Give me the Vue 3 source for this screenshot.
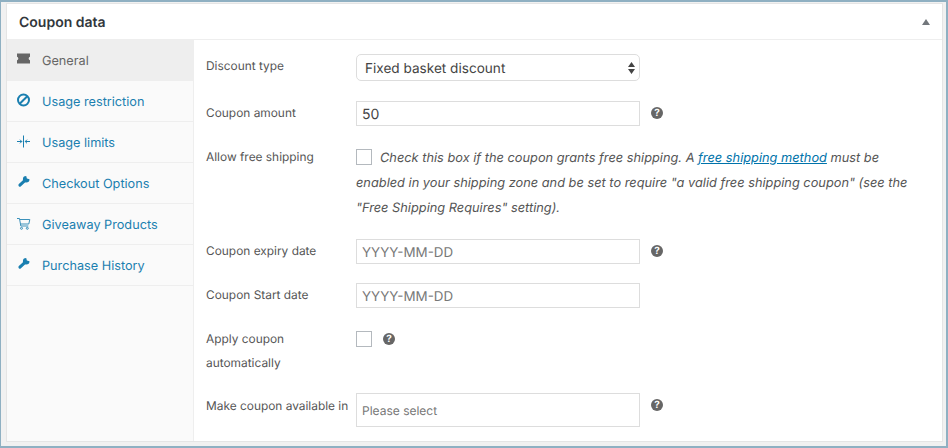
<script setup>
const tabs = [
  { label: 'General', icon: 'ticket', active: true },
  { label: 'Usage restriction', icon: 'ban' },
  { label: 'Usage limits', icon: 'limits' },
  { label: 'Checkout Options', icon: 'wrench' },
  { label: 'Giveaway Products', icon: 'cart' },
  { label: 'Purchase History', icon: 'wrench' },
]
</script>

<template>
  <div class="frame">
    <section class="panel">
      <header class="head">
        <h2>Coupon data</h2>
        <span class="caret"></span>
      </header>
      <div class="body">
        <nav class="side">
          <a v-for="t in tabs" :key="t.label" class="tab" :class="{ active: t.active }">
            <svg class="ico" viewBox="0 0 14 14" width="14" height="14">
              <path v-if="t.icon === 'ticket'" fill="currentColor" d="M0 1.500h13v3.200c-.9.300-1.300 1-1.300 1.800s.4 1.500 1.300 1.800v3.200H0V8.300c.9-.3 1.300-1 1.300-1.800S.9 5 0 4.700z"/>
              <g v-else-if="t.icon === 'ban'">
                <circle cx="6.500" cy="7" r="5.500" fill="none" stroke="currentColor" stroke-width="2"/>
                <path d="M2.700 10.800l7.600-7.600" stroke="currentColor" stroke-width="2"/>
              </g>
              <path v-else-if="t.icon === 'limits'" fill="none" stroke="currentColor" stroke-width="1" d="M6.500 1.500v12M0 7.500h4.800M3 5.700l1.800 1.800L3 9.300M13 7.500H8.200M10 5.700L8.200 7.500 10 9.300"/>
              <g v-else-if="t.icon === 'wrench'">
                <path fill="currentColor" d="M9.200 1L9.900 3.600L12.500 4.300A3.300 3.300 0 1 1 9.200 1Z"/>
                <path d="M2.900 10.200L7.500 5.800" stroke="currentColor" stroke-width="3" stroke-linecap="round"/>
              </g>
              <g v-else fill="none" stroke="currentColor" stroke-width="1" opacity=".85">
                <path d="M0 2.500h2.500l1.300 7.500h7.500M2.800 3.500h10l-1 4.500H3.500"/>
                <circle cx="4.500" cy="12.300" r="1"/>
                <circle cx="10.300" cy="12.300" r="1"/>
              </g>
            </svg>
            <span class="tab-label">{{ t.label }}</span>
          </a>
        </nav>
        <div class="form">
          <div class="row r-type">
            <label>Discount type</label>
            <div class="fake-select">
              <span class="sel-label">Fixed basket discount</span>
              <svg width="7" height="12" viewBox="0 0 7 12"><path fill="#444" d="M3.500 0L7 5H0zM3.500 12L0 7h7z"/></svg>
            </div>
          </div>
          <div class="row r-amount">
            <label>Coupon amount</label>
            <div class="ctl">
              <input class="text val" value="50" />
              <span class="help">?</span>
            </div>
          </div>
          <div class="row r-ship">
            <label>Allow free shipping</label>
            <p class="ship"><span class="check"></span>Check this box if the coupon grants free shipping. A <a>free shipping method</a> must be enabled in your shipping zone and be set to require "a valid free shipping coupon" (see the "Free Shipping Requires" setting).</p>
          </div>
          <div class="row r-expiry">
            <label>Coupon expiry date</label>
            <div class="ctl">
              <input class="text" placeholder="YYYY-MM-DD" />
              <span class="help">?</span>
            </div>
          </div>
          <div class="row r-start">
            <label>Coupon Start date</label>
            <div class="ctl">
              <input class="text" placeholder="YYYY-MM-DD" />
            </div>
          </div>
          <div class="row r-auto">
            <label>Apply coupon<br />automatically</label>
            <div class="ctl top">
              <span class="check"></span>
              <span class="help small">?</span>
            </div>
          </div>
          <div class="row r-avail">
            <label>Make coupon available in</label>
            <div class="ctl top">
              <div class="multi">Please select</div>
              <span class="help">?</span>
            </div>
          </div>
        </div>
      </div>
    </section>
  </div>
</template>

<style scoped>
.frame {
  width: 948px;
  height: 448px;
  box-sizing: border-box;
  border: solid #8fb0c2;
  border-width: 2px 2px 2px 1px;
  background: #f1f1f1;
  padding: 1px 3px 4px 5px;
  font-family: Inter, "Liberation Sans", sans-serif;
  text-rendering: geometricPrecision;
  overflow: hidden;
}
.panel {
  height: 100%;
  box-sizing: border-box;
  background: #fff;
  border: 1px solid #e5e5e5;
  display: flex;
  flex-direction: column;
}
.head {
  height: 36px;
  box-sizing: border-box;
  flex: none;
  border-bottom: 1px solid #eee;
  display: flex;
  align-items: center;
  justify-content: space-between;
  padding: 0 12px;
}
h2 {
  margin: 0;
  padding-top: 2px;
  font-size: 14px;
  font-weight: 600;
  color: #32373c;
}
.caret {
  width: 0;
  height: 0;
  border: 4.500px solid transparent;
  border-top-width: 0;
  border-bottom: 6px solid #72777c;
}
.body { display: flex; flex: 1; min-height: 0; }
.side {
  width: 186px;
  flex: none;
  background: #fafafa;
  border-right: 1px solid #eee;
}
.tab {
  height: 40px;
  border-bottom: 1px solid #eee;
  display: flex;
  align-items: center;
  gap: 11px;
  padding-left: 10px;
  color: #1a7fb0;
  font-size: 12.700px;
}
.tab-label { padding-top: 2px; }
.tab.active { background: #eee; color: #666; }
.ico { flex: none; margin-top: -2px; }
.form {
  flex: 1;
  padding: 14px 0 0 12px;
  font-size: 12px;
  color: #555;
}
.row { display: grid; grid-template-columns: 150px 1fr; }
label { font-size: 11.900px; color: #555; line-height: 24px; }
.r-type { height: 47px; }
.r-amount { height: 48px; }
.r-ship { height: 90px; }
.r-ship label { margin-top: -4px; }
.r-expiry { height: 44px; }
.r-start { height: 48px; }
.r-auto { height: 62px; }
.r-auto label { margin-top: -4px; }
.fake-select {
  width: 284px;
  height: 27px;
  box-sizing: border-box;
  border: 1px solid #ddd;
  border-radius: 5px;
  display: flex;
  align-items: center;
  justify-content: space-between;
  padding: 0 4px 0 8px;
  font-size: 13.600px;
  color: #444;
}
.sel-label { padding-top: 2px; }
.ctl { display: flex; align-items: center; gap: 11px; height: 25px; }
.ctl.top { align-items: flex-start; }
.text {
  width: 284px;
  height: 25px;
  box-sizing: border-box;
  border: 1px solid #ddd;
  padding: 2px 5px 0;
  font: 13.400px Inter, "Liberation Sans", sans-serif;
  text-rendering: geometricPrecision;
  color: #444;
  outline: none;
}
.text.val { font-size: 14px; }
.text::placeholder { color: #777; opacity: 1; }
.help {
  width: 12px;
  height: 12px;
  border-radius: 50%;
  background: #666;
  color: #fff;
  font-size: 10px;
  font-weight: 700;
  line-height: 12px;
  text-align: center;
  flex: none;
  margin-top: -2px;
}
.check {
  display: block;
  flex: none;
  width: 16px;
  height: 16px;
  box-sizing: border-box;
  border: 1px solid #b4b9be;
  background: #fff;
}
.ship {
  margin: -3px 0 0;
  width: 555px;
  font-size: 12.800px;
  font-style: italic;
  line-height: 25px;
  color: #555;
}
.ship .check {
  display: inline-block;
  vertical-align: top;
  margin: 3px 8px 0 0;
}
.ship a { color: #0073aa; text-decoration: underline; }
.ctl .small { margin-top: 2px; }
.multi {
  width: 284px;
  height: 34px;
  box-sizing: border-box;
  border: 1px solid #ddd;
  padding: 0 5px;
  font-size: 12px;
  line-height: 34px;
  color: #777;
}
.r-avail .help { margin-top: 6px; }
.r-avail label { margin-top: 1px; }
</style>
